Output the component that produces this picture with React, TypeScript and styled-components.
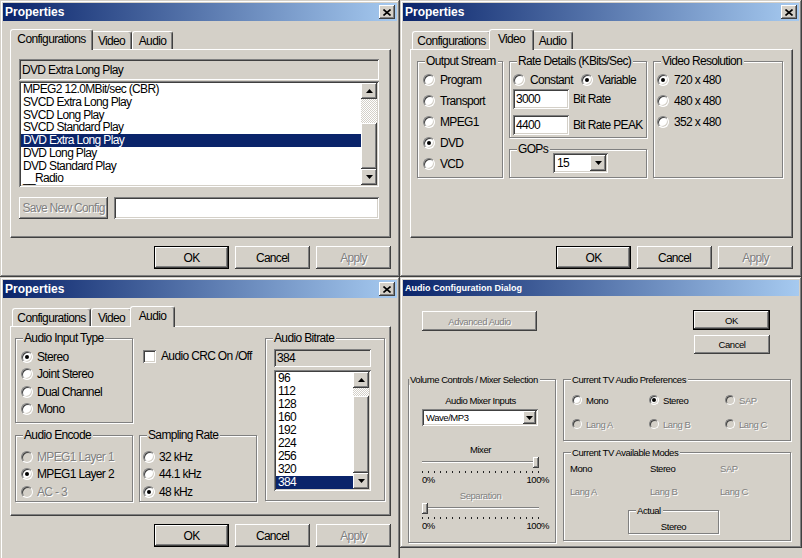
import styled, { createGlobalStyle, css } from "styled-components";

const FACE = "#D4D0C8";
const SHADOW = "#808080";
const DARK = "#404040";
const NAVY = "#0A246A";

const raised = css`
  box-shadow: inset -1px -1px ${DARK}, inset 1px 1px #fff,
    inset -2px -2px ${SHADOW}, inset 2px 2px ${FACE};
`;

const sunken = css`
  box-shadow: inset 1px 1px ${SHADOW}, inset -1px -1px #fff,
    inset 2px 2px ${DARK}, inset -2px -2px ${FACE};
`;

const greyedText = css`
  color: ${SHADOW};
  text-shadow: 1px 1px #fff;
`;

const GlobalStyle = createGlobalStyle`
  body {
    margin: 0;
    background: ${FACE};
    font-family: "Liberation Sans", Arial, sans-serif;
    font-size: 12px;
    letter-spacing: -0.65px;
    color: #000;
  }
`;

const Screen = styled.div`
  display: grid;
  grid-template-columns: 400px 402px;
  grid-template-rows: 277px 281px;
  align-items: start;
  width: 802px;
  height: 558px;
  overflow: hidden;
`;

const Window = styled.section<{ $h: number; $compact?: boolean }>`
  box-sizing: border-box;
  display: flex;
  flex-direction: column;
  height: ${(p) => p.$h}px;
  padding: 3px;
  background: ${FACE};
  box-shadow: inset -1px -1px ${DARK}, inset 1px 1px ${FACE},
    inset -2px -2px ${SHADOW}, inset 2px 2px #fff;
  ${(p) =>
    p.$compact &&
    css`
      font-size: 9.5px;
      letter-spacing: -0.45px;
    `}
`;

const TitleBar = styled.header<{ $small?: boolean }>`
  flex: none;
  display: flex;
  align-items: center;
  height: ${(p) => (p.$small ? 16 : 18)}px;
  padding: 0 2px;
  background: linear-gradient(90deg, ${NAVY}, #a6caf0);
  color: #fff;
  font-weight: bold;
  font-size: ${(p) => (p.$small ? 9 : 12)}px;
  letter-spacing: 0;
`;

const TitleText = styled.span`
  flex: 1;
`;

const CloseButton = styled.span`
  display: flex;
  align-items: center;
  justify-content: center;
  width: 16px;
  height: 14px;
  background: ${FACE};
  ${raised}
`;

const DialogBody = styled.div`
  display: flex;
  flex-direction: column;
  padding: 8px 6px 0 7px;
`;

const TabStrip = styled.div`
  display: flex;
  align-items: flex-end;
  height: 20px;
  padding-left: 2px;
`;

const Tab = styled.div<{ $active?: boolean; $w: number }>`
  position: relative;
  z-index: ${(p) => (p.$active ? 1 : 0)};
  box-sizing: border-box;
  display: flex;
  align-items: center;
  justify-content: center;
  width: ${(p) => p.$w + (p.$active ? 4 : 0)}px;
  height: ${(p) => (p.$active ? 21 : 18)}px;
  margin: 0 ${(p) => (p.$active ? -2 : 0)}px ${(p) => (p.$active ? -1 : 0)}px;
  padding-bottom: ${(p) => (p.$active ? 2 : 0)}px;
  background: ${FACE};
  border-top: 1px solid #fff;
  border-left: 1px solid #fff;
  border-right: 1px solid ${DARK};
  border-radius: 3px 3px 0 0;
  box-shadow: inset -1px 0 ${SHADOW};
  white-space: nowrap;
`;

const TabPanel = styled.div<{ $h: number; $pad: string }>`
  box-sizing: border-box;
  display: flex;
  flex-direction: column;
  height: ${(p) => p.$h}px;
  padding: ${(p) => p.$pad};
  border: 1px solid;
  border-color: #fff ${DARK} ${DARK} #fff;
  box-shadow: inset -1px -1px ${SHADOW};
`;

const ButtonRow = styled.div`
  display: flex;
  justify-content: flex-end;
  gap: 6px;
  margin-top: 8px;
`;

const PushButton = styled.button<{
  $w: number;
  $h?: number;
  $default?: boolean;
  $mt?: number;
  $compact?: boolean;
}>`
  box-sizing: border-box;
  flex: none;
  width: ${(p) => p.$w}px;
  height: ${(p) => p.$h ?? 23}px;
  margin-top: ${(p) => p.$mt ?? 0}px;
  padding: 0;
  font-family: "Liberation Sans", Arial, sans-serif;
  font-size: ${(p) => (p.$compact ? 9.5 : 12)}px;
  letter-spacing: ${(p) => (p.$compact ? -0.45 : -0.7)}px;
  white-space: nowrap;
  overflow: visible;
  color: #000;
  background: ${FACE};
  border: ${(p) => (p.$default ? "1px solid #000" : "none")};
  ${raised}
  &:disabled {
    ${greyedText}
  }
`;

const Field = styled.div<{ $w?: number; $h: number; $mt?: number; $grey?: boolean }>`
  box-sizing: border-box;
  flex: none;
  display: flex;
  align-items: center;
  width: ${(p) => (p.$w ? `${p.$w}px` : "auto")};
  height: ${(p) => p.$h}px;
  margin-top: ${(p) => p.$mt ?? 0}px;
  padding: 0 3px;
  background: ${(p) => (p.$grey ? FACE : "#fff")};
  white-space: nowrap;
  ${sunken}
`;

const ListBox = styled.div<{ $w?: number; $h: number; $mt?: number }>`
  box-sizing: border-box;
  flex: none;
  display: flex;
  width: ${(p) => (p.$w ? `${p.$w}px` : "auto")};
  height: ${(p) => p.$h}px;
  margin-top: ${(p) => p.$mt ?? 0}px;
  padding: 2px;
  background: #fff;
  ${sunken}
`;

const ListItems = styled.ul<{ $row: number }>`
  flex: 1;
  margin: 0;
  padding: 0;
  list-style: none;
  overflow: hidden;
  & > li {
    height: ${(p) => p.$row}px;
    line-height: ${(p) => p.$row}px;
  }
`;

const ListItem = styled.li<{ $selected?: boolean }>`
  padding-left: 2px;
  white-space: nowrap;
  background: ${(p) => (p.$selected ? NAVY : "transparent")};
  color: ${(p) => (p.$selected ? "#fff" : "#000")};
`;

const ScrollBar = styled.div`
  flex: none;
  display: flex;
  flex-direction: column;
  width: 16px;
`;

const ScrollArrow = styled.div`
  flex: none;
  display: flex;
  align-items: center;
  justify-content: center;
  height: 16px;
  background: ${FACE};
  ${raised}
`;

const ScrollTrack = styled.div`
  flex: 1;
  display: flex;
  flex-direction: column;
  background: conic-gradient(#fff 25%, ${FACE} 0 50%, #fff 0 75%, ${FACE} 0)
    0 0 / 2px 2px;
`;

const ScrollGap = styled.div<{ $h: number }>`
  flex: none;
  height: ${(p) => p.$h}px;
`;

const ScrollThumb = styled.div<{ $h: number }>`
  flex: none;
  height: ${(p) => p.$h}px;
  background: ${FACE};
  ${raised}
`;

const SaveRow = styled.div`
  display: flex;
  gap: 6px;
  margin-top: 10px;
  & > :last-child {
    flex: 1;
  }
`;

const Group = styled.div<{ $w?: number; $h: number; $pad: string; $ml?: number }>`
  position: relative;
  box-sizing: border-box;
  flex: none;
  width: ${(p) => (p.$w ? `${p.$w}px` : "auto")};
  height: ${(p) => p.$h}px;
  margin-left: ${(p) => p.$ml ?? 0}px;
  padding: ${(p) => p.$pad};
  border: 1px solid ${SHADOW};
  box-shadow: inset 1px 1px #fff, 1px 1px #fff;
`;

const GroupLabel = styled.span<{ $compact?: boolean; $left?: number }>`
  position: absolute;
  top: ${(p) => (p.$compact ? -6 : -7)}px;
  left: ${(p) => p.$left ?? 7}px;
  padding: 0 2px 0 1px;
  line-height: ${(p) => (p.$compact ? 11 : 13)}px;
  background: ${FACE};
  white-space: nowrap;
`;

const RadioRow = styled.div<{ $h?: number; $off?: boolean; $gap?: number }>`
  display: flex;
  align-items: center;
  gap: ${(p) => p.$gap ?? 5}px;
  height: ${(p) => p.$h ?? 21}px;
  white-space: nowrap;
  ${(p) => p.$off && greyedText}
`;

const RadioDot = styled.span<{ $on?: boolean; $off?: boolean; $size?: number }>`
  position: relative;
  flex: none;
  box-sizing: border-box;
  width: ${(p) => p.$size ?? 12}px;
  height: ${(p) => p.$size ?? 12}px;
  border-radius: 50%;
  background: ${(p) => (p.$off ? FACE : "#fff")};
  border: 1px solid;
  border-color: ${SHADOW} #fff #fff ${SHADOW};
  box-shadow: inset 1px 1px ${DARK}, inset -1px -1px ${FACE};
  &::after {
    content: "";
    display: ${(p) => (p.$on ? "block" : "none")};
    position: absolute;
    left: 50%;
    top: 50%;
    width: 4px;
    height: 4px;
    margin: -2px 0 0 -2px;
    border-radius: 50%;
    background: ${(p) => (p.$off ? SHADOW : "#000")};
  }
`;

const CheckBox = styled.span`
  flex: none;
  box-sizing: border-box;
  width: 13px;
  height: 13px;
  background: #fff;
  ${sunken}
`;

const CheckRow = styled.label`
  display: flex;
  align-items: center;
  gap: 5px;
  align-self: start;
  padding: 11px 0 0 4px;
  white-space: nowrap;
`;

const Combo = styled.div<{ $w: number; $h: number; $mt?: number }>`
  box-sizing: border-box;
  flex: none;
  display: flex;
  width: ${(p) => p.$w}px;
  height: ${(p) => p.$h}px;
  margin-top: ${(p) => p.$mt ?? 0}px;
  padding: 2px;
  background: #fff;
  ${sunken}
`;

const ComboValue = styled.span`
  flex: 1;
  display: flex;
  align-items: center;
  padding-left: 2px;
`;

const ComboButton = styled.span<{ $w?: number }>`
  flex: none;
  display: flex;
  align-items: center;
  justify-content: center;
  width: ${(p) => p.$w ?? 16}px;
  background: ${FACE};
  ${raised}
`;

/* video tab */
const VideoLayout = styled.div`
  display: flex;
  gap: 6px;
`;

const Stack = styled.div<{ $gap: number }>`
  display: flex;
  flex-direction: column;
  gap: ${(p) => p.$gap}px;
`;

const RateModes = styled.div`
  display: grid;
  grid-template-columns: 68px auto;
`;

const FieldRow = styled.div<{ $mt: number }>`
  display: flex;
  align-items: center;
  gap: 4px;
  margin-top: ${(p) => p.$mt}px;
  white-space: nowrap;
`;

/* audio tab */
const AudioLayout = styled.div`
  display: grid;
  grid-template-columns: 118px 118px 122px;
  grid-template-rows: 85px 67px;
  column-gap: 6px;
  row-gap: 12px;
`;

const SpanCell = styled.div`
  grid-column: 3;
  grid-row: 1 / span 2;
`;

/* audio configuration dialog */
const CompactBody = styled.div`
  display: flex;
  flex-direction: column;
  padding: 14px 7px 0 5px;
`;

const CompactTopRow = styled.div`
  display: flex;
  justify-content: space-between;
  align-items: flex-start;
  padding: 0 22px 0 14px;
`;

const StackedButtons = styled.div`
  display: flex;
  flex-direction: column;
  align-items: flex-end;
  gap: 5px;
`;

const CompactGroups = styled.div`
  display: flex;
  gap: 7px;
  margin-top: 25px;
`;

const MixerColumn = styled.div`
  display: flex;
  flex-direction: column;
  width: 117px;
  margin-left: 13px;
`;

const Caption = styled.div<{ $mt?: number; $off?: boolean }>`
  height: 12px;
  line-height: 12px;
  margin-top: ${(p) => p.$mt ?? 0}px;
  text-align: center;
  ${(p) => p.$off && greyedText}
`;

const SliderBox = styled.div`
  position: relative;
  height: 12px;
`;

const SliderTrack = styled.div`
  box-sizing: border-box;
  margin-top: 5px;
  height: 2px;
  border-top: 1px solid ${SHADOW};
  border-bottom: 1px solid #fff;
`;

const SliderThumb = styled.div<{ $end: "start" | "end" }>`
  position: absolute;
  top: 1px;
  ${(p) => (p.$end === "end" ? "right: 0;" : "left: 0;")}
  box-sizing: border-box;
  width: 6px;
  height: 11px;
  background: ${FACE};
  ${raised}
`;

const Ticks = styled.div`
  height: 2px;
  margin-top: 3px;
  background: repeating-linear-gradient(
    90deg,
    #222 0 1px,
    transparent 1px 6.1px
  );
`;

const Scale = styled.div`
  display: flex;
  justify-content: space-between;
  width: 127px;
  height: 10px;
  line-height: 10px;
  margin-top: 2px;
`;

const PrefGrid = styled.div`
  display: grid;
  grid-template-columns: 77px 76px auto;
  grid-auto-rows: 12px;
  row-gap: 12px;
`;

const ModesGrid = styled.div`
  display: grid;
  grid-template-columns: 80px 70px auto;
  grid-auto-rows: 12px;
  row-gap: 11px;
  line-height: 12px;
`;

const ModeText = styled.span<{ $off?: boolean }>`
  ${(p) => p.$off && greyedText}
`;

const ActualBox = styled(Group)`
  margin: 12px 0 0 58px;
  text-align: center;
  line-height: 12px;
`;

const Arrow = ({ dir }: { dir: "up" | "down" }) => (
  <svg width="7" height="4" viewBox="0 0 7 4">
    <path d={dir === "up" ? "M3.5 0L7 4H0z" : "M0 0h7L3.5 4z"} fill="#000" />
  </svg>
);

const CloseGlyph = () => (
  <svg width="8" height="7" viewBox="0 0 8 7">
    <path d="M0.5 0.5l7 6M7.5 0.5l-7 6" stroke="#000" strokeWidth="1.6" />
  </svg>
);

const configs = [
  "MPEG2 12.0MBit/sec (CBR)",
  "SVCD Extra Long Play",
  "SVCD Long Play",
  "SVCD Standard Play",
  "DVD Extra Long Play",
  "DVD Long Play",
  "DVD Standard Play",
  "__Radio",
];

const bitrates = ["96", "112", "128", "160", "192", "224", "256", "320", "384"];

function PropertiesTitle() {
  return (
    <TitleBar>
      <TitleText>Properties</TitleText>
      <CloseButton>
        <CloseGlyph />
      </CloseButton>
    </TitleBar>
  );
}

function Tabs({ active }: { active: string }) {
  const tabs: [string, number][] = [
    ["Configurations", 79],
    ["Video", 41],
    ["Audio", 41],
  ];
  return (
    <TabStrip>
      {tabs.map(([name, w]) => (
        <Tab key={name} $w={w} $active={name === active}>
          {name}
        </Tab>
      ))}
    </TabStrip>
  );
}

function DialogButtons() {
  return (
    <ButtonRow>
      <PushButton $w={75} $default>
        OK
      </PushButton>
      <PushButton $w={75}>Cancel</PushButton>
      <PushButton $w={75} disabled>
        Apply
      </PushButton>
    </ButtonRow>
  );
}

function Radio({
  label,
  on,
  off,
  h,
  size,
  gap,
}: {
  label: string;
  on?: boolean;
  off?: boolean;
  h?: number;
  size?: number;
  gap?: number;
}) {
  return (
    <RadioRow $h={h} $off={off} $gap={gap}>
      <RadioDot $on={on} $off={off} $size={size} />
      {label}
    </RadioRow>
  );
}

function ConfigurationsWindow() {
  return (
    <Window $h={277}>
      <PropertiesTitle />
      <DialogBody>
        <Tabs active="Configurations" />
        <TabPanel $h={189} $pad="9px 11px 0 8px">
          <Field $h={21} $grey>
            DVD Extra Long Play
          </Field>
          <ListBox $h={106} $mt={1}>
            <ListItems $row={12.75}>
              {configs.map((c) => (
                <ListItem key={c} $selected={c === "DVD Extra Long Play"}>
                  {c}
                </ListItem>
              ))}
            </ListItems>
            <ScrollBar>
              <ScrollArrow>
                <Arrow dir="up" />
              </ScrollArrow>
              <ScrollTrack>
                <ScrollGap $h={24} />
                <ScrollThumb $h={46} />
              </ScrollTrack>
              <ScrollArrow>
                <Arrow dir="down" />
              </ScrollArrow>
            </ScrollBar>
          </ListBox>
          <SaveRow>
            <PushButton $w={89} $h={22} disabled>
              Save New Config
            </PushButton>
            <Field $h={22} />
          </SaveRow>
        </TabPanel>
        <DialogButtons />
      </DialogBody>
    </Window>
  );
}

function VideoWindow() {
  return (
    <Window $h={277}>
      <PropertiesTitle />
      <DialogBody>
        <Tabs active="Video" />
        <TabPanel $h={189} $pad="11px 0 0 6px">
          <VideoLayout>
            <Group $w={86} $h={117} $pad="7px 0 0 5px">
              <GroupLabel>Output Stream</GroupLabel>
              <Radio label="Program" />
              <Radio label="Transport" />
              <Radio label="MPEG1" />
              <Radio label="DVD" on />
              <Radio label="VCD" />
            </Group>
            <Stack $gap={11}>
              <Group $w={138} $h={77} $pad="9px 0 0 3px">
                <GroupLabel>Rate Details (KBits/Sec)</GroupLabel>
                <RateModes>
                  <Radio label="Constant" h={17} />
                  <Radio label="Variable" h={17} on />
                </RateModes>
                <FieldRow $mt={1}>
                  <Field $w={56} $h={20}>
                    3000
                  </Field>
                  Bit Rate
                </FieldRow>
                <FieldRow $mt={6}>
                  <Field $w={56} $h={20}>
                    4400
                  </Field>
                  Bit Rate PEAK
                </FieldRow>
              </Group>
              <Group $w={138} $h={29} $pad="3px 0 0 43px">
                <GroupLabel>GOPs</GroupLabel>
                <Combo $w={55} $h={20}>
                  <ComboValue>15</ComboValue>
                  <ComboButton>
                    <Arrow dir="down" />
                  </ComboButton>
                </Combo>
              </Group>
            </Stack>
            <Group $w={130} $h={117} $pad="7px 0 0 3px">
              <GroupLabel>Video Resolution</GroupLabel>
              <Radio label="720 x 480" on />
              <Radio label="480 x 480" />
              <Radio label="352 x 480" />
            </Group>
          </VideoLayout>
        </TabPanel>
        <DialogButtons />
      </DialogBody>
    </Window>
  );
}

function AudioWindow() {
  return (
    <Window $h={286}>
      <PropertiesTitle />
      <DialogBody>
        <Tabs active="Audio" />
        <TabPanel $h={190} $pad="11px 0 0 4px">
          <AudioLayout>
            <Group $h={85} $pad="9px 0 0 5px">
              <GroupLabel>Audio Input Type</GroupLabel>
              <Radio label="Stereo" on h={17.5} gap={4} />
              <Radio label="Joint Stereo" h={17.5} gap={4} />
              <Radio label="Dual Channel" h={17.5} gap={4} />
              <Radio label="Mono" h={17.5} gap={4} />
            </Group>
            <CheckRow>
              <CheckBox />
              Audio CRC On /Off
            </CheckRow>
            <SpanCell>
              <Group $h={163} $ml={2} $pad="10px 0 0 8px">
                <GroupLabel>Audio Bitrate</GroupLabel>
                <Field $w={97} $h={18} $grey>
                  384
                </Field>
                <ListBox $w={97} $h={121} $mt={3}>
                  <ListItems $row={13}>
                    {bitrates.map((b) => (
                      <ListItem key={b} $selected={b === "384"}>
                        {b}
                      </ListItem>
                    ))}
                  </ListItems>
                  <ScrollBar>
                    <ScrollArrow>
                      <Arrow dir="up" />
                    </ScrollArrow>
                    <ScrollTrack>
                      <ScrollGap $h={8} />
                      <ScrollThumb $h={77} />
                    </ScrollTrack>
                    <ScrollArrow>
                      <Arrow dir="down" />
                    </ScrollArrow>
                  </ScrollBar>
                </ListBox>
              </Group>
            </SpanCell>
            <Group $h={67} $pad="12px 0 0 5px">
              <GroupLabel>Audio Encode</GroupLabel>
              <Radio label="MPEG1 Layer 1" off h={17.5} gap={4} />
              <Radio label="MPEG1 Layer 2" on h={17.5} gap={4} />
              <Radio label="AC - 3" off h={17.5} gap={4} />
            </Group>
            <Group $h={67} $pad="12px 0 0 3px">
              <GroupLabel>Sampling Rate</GroupLabel>
              <Radio label="32 kHz" h={17.5} gap={4} />
              <Radio label="44.1 kHz" h={17.5} gap={4} />
              <Radio label="48 kHz" on h={17.5} gap={4} />
            </Group>
          </AudioLayout>
        </TabPanel>
        <DialogButtons />
      </DialogBody>
    </Window>
  );
}

function AudioConfigWindow() {
  return (
    <Window $h={271} $compact>
      <TitleBar $small>Audio Configuration Dialog</TitleBar>
      <CompactBody>
        <CompactTopRow>
          <PushButton $w={115} $h={20} $mt={1} $compact disabled>
            Advanced Audio
          </PushButton>
          <StackedButtons>
            <PushButton $w={77} $h={20} $compact $default>
              OK
            </PushButton>
            <PushButton $w={76} $h={19} $compact>
              Cancel
            </PushButton>
          </StackedButtons>
        </CompactTopRow>
        <CompactGroups>
          <Group $w={148} $h={164} $pad="15px 0 0 0">
            <GroupLabel $compact $left={0}>
              Volume Controls / Mixer Selection
            </GroupLabel>
            <MixerColumn>
              <Caption>Audio Mixer Inputs</Caption>
              <Combo $w={116} $h={17} $mt={2}>
                <ComboValue>Wave/MP3</ComboValue>
                <ComboButton $w={13}>
                  <Arrow dir="down" />
                </ComboButton>
              </Combo>
              <Caption $mt={18}>Mixer</Caption>
              <SliderBox>
                <SliderTrack />
                <SliderThumb $end="end" />
              </SliderBox>
              <Ticks />
              <Scale>
                <span>0%</span>
                <span>100%</span>
              </Scale>
              <Caption $mt={5} $off>
                Separation
              </Caption>
              <SliderBox>
                <SliderTrack />
                <SliderThumb $end="start" />
              </SliderBox>
              <Ticks />
              <Scale>
                <span>0%</span>
                <span>100%</span>
              </Scale>
            </MixerColumn>
          </Group>
          <Stack $gap={11}>
            <Group $w={228} $h={62} $pad="14px 0 0 8px">
              <GroupLabel $compact>Current TV Audio Preferences</GroupLabel>
              <PrefGrid>
                <Radio label="Mono" h={12} size={10} gap={4} />
                <Radio label="Stereo" on h={12} size={10} gap={4} />
                <Radio label="SAP" off h={12} size={10} gap={4} />
                <Radio label="Lang A" off h={12} size={10} gap={4} />
                <Radio label="Lang B" off h={12} size={10} gap={4} />
                <Radio label="Lang C" off h={12} size={10} gap={4} />
              </PrefGrid>
            </Group>
            <Group $w={228} $h={89} $pad="10px 0 0 6px">
              <GroupLabel $compact>Current TV Available Modes</GroupLabel>
              <ModesGrid>
                <ModeText>Mono</ModeText>
                <ModeText>Stereo</ModeText>
                <ModeText $off>SAP</ModeText>
                <ModeText $off>Lang A</ModeText>
                <ModeText $off>Lang B</ModeText>
                <ModeText $off>Lang C</ModeText>
              </ModesGrid>
              <ActualBox $w={91} $h={24} $pad="10px 0 0 0">
                <GroupLabel $compact>Actual</GroupLabel>
                Stereo
              </ActualBox>
            </Group>
          </Stack>
        </CompactGroups>
      </CompactBody>
    </Window>
  );
}

export default function App() {
  return (
    <>
      <GlobalStyle />
      <Screen>
        <ConfigurationsWindow />
        <VideoWindow />
        <AudioWindow />
        <AudioConfigWindow />
      </Screen>
    </>
  );
}
